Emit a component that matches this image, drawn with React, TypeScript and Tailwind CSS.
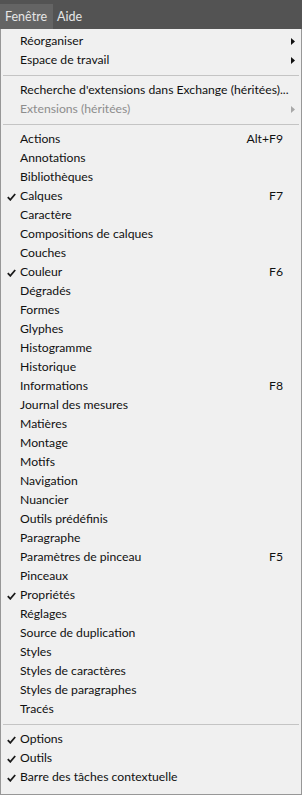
import React from "react";

type Item =
    | { kind: "sep" }
    | { kind: "item"; label: string; checked?: boolean; shortcut?: string; submenu?: boolean; disabled?: boolean };

const it = (label: string, extra: Partial<Omit<Extract<Item, { kind: "item" }>, "kind" | "label">> = {}): Item => ({
    kind: "item",
    label,
    ...extra,
});
const sep: Item = { kind: "sep" };

const items: Item[] = [
    it("Réorganiser", { submenu: true }),
    it("Espace de travail", { submenu: true }),
    sep,
    it("Recherche d'extensions dans Exchange (héritées)..."),
    it("Extensions (héritées)", { submenu: true, disabled: true }),
    sep,
    it("Actions", { shortcut: "Alt+F9" }),
    it("Annotations"),
    it("Bibliothèques"),
    it("Calques", { checked: true, shortcut: "F7" }),
    it("Caractère"),
    it("Compositions de calques"),
    it("Couches"),
    it("Couleur", { checked: true, shortcut: "F6" }),
    it("Dégradés"),
    it("Formes"),
    it("Glyphes"),
    it("Histogramme"),
    it("Historique"),
    it("Informations", { shortcut: "F8" }),
    it("Journal des mesures"),
    it("Matières"),
    it("Montage"),
    it("Motifs"),
    it("Navigation"),
    it("Nuancier"),
    it("Outils prédéfinis"),
    it("Paragraphe"),
    it("Paramètres de pinceau", { shortcut: "F5" }),
    it("Pinceaux"),
    it("Propriétés", { checked: true }),
    it("Réglages"),
    it("Source de duplication"),
    it("Styles"),
    it("Styles de caractères"),
    it("Styles de paragraphes"),
    it("Tracés"),
    sep,
    it("Options", { checked: true }),
    it("Outils", { checked: true }),
    it("Barre des tâches contextuelle", { checked: true }),
];

const Check = () => (
    <svg width="9" height="8" viewBox="0 0 9 8" className="block">
        <path d="M0.8 4.2 L3.3 6.8 L8.2 1" fill="none" stroke="#1a1a1a" strokeWidth="1.8"/>
    </svg>
);

const Arrow = ({ disabled }: { disabled?: boolean }) => (
    <svg width="4" height="7" viewBox="0 0 4 7" className="block">
        <path d="M0 0 L4 3.5 L0 7 Z" fill={disabled ? "#a8a8a8" : "#111111"}/>
    </svg>
);

export default function App() {
    return (
        <div className="w-[302px] h-[795px] bg-[#535353] flex flex-col" style={{ fontFamily: 'Lato, "Noto Sans", sans-serif' }}>
            {/* Menu bar */}
            <div className="h-[29px] flex items-end shrink-0 text-[12.5px] text-[#e6e6e6]">
                <div className="h-[25px] w-[53px] bg-[#646464] flex items-center pl-[5px] pt-[1px]">Fenêtre</div>
                <div className="h-[25px] flex items-center pl-[4px] pt-[1px]">Aide</div>
            </div>

            {/* Dropdown */}
            <div className="flex-1 bg-[#f0f0f0] border-x border-b border-[#979797] pt-[3px] text-[12.2px] text-[#111111]">
                {items.map((item, i) =>
                    item.kind === "sep" ? (
                        <div key={i} className="h-[11px] flex items-center px-[2px]">
                            <div className="h-px w-full bg-[#c4c4c4]"/>
                        </div>
                    ) : (
                        <div key={i} className={`h-[19px] flex items-center ${item.disabled ? "text-[#8d8d8d]" : ""}`}>
                            <div className="w-[19px] shrink-0 flex justify-center pl-[1px]">{item.checked && <Check/>}</div>
                            <div className="flex-1 min-w-0 whitespace-nowrap leading-none">{item.label}</div>
                            <div className="whitespace-nowrap leading-none pr-[1px]">{item.shortcut}</div>
                            <div className="w-[17px] shrink-0 flex justify-center">{item.submenu && <Arrow disabled={item.disabled}/>}</div>
                        </div>
                    )
                )}
            </div>
        </div>
    );
}
